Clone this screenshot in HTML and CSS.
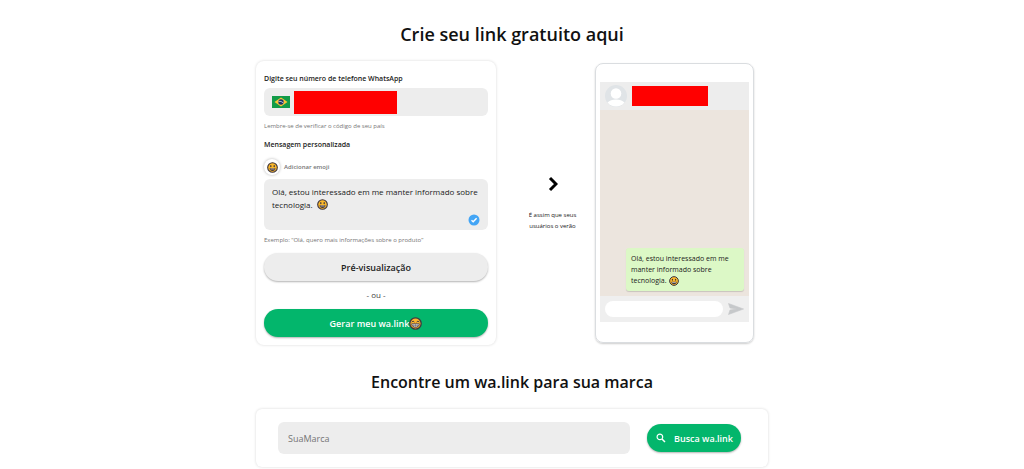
FILE: index.html
```html
<!DOCTYPE html>
<html lang="pt-BR">
<head>
<meta charset="utf-8">
<meta name="viewport" content="width=device-width, initial-scale=1">
<title>wa.link</title>
<link rel="stylesheet" href="styles.css">
</head>
<body>
<svg class="sprite" aria-hidden="true">
  <symbol id="grin" viewBox="0 0 24 24">
    <circle cx="12" cy="12" r="10.5" fill="#fcb92a" stroke="#3d3540" stroke-width="2.4"/>
    <ellipse cx="8.3" cy="9" rx="1.5" ry="2.2" fill="#3d3540"/>
    <ellipse cx="15.7" cy="9" rx="1.5" ry="2.2" fill="#3d3540"/>
    <path d="M5.500 13.500h13c0 3.500-2.800 6-6.500 6s-6.500-2.500-6.500-6z" fill="#3d3540"/>
    <path d="M7.500 14.500h9v1.500h-9z" fill="#e8e0d8"/>
  </symbol>
  <symbol id="beam" viewBox="0 0 24 24">
    <circle cx="12" cy="12" r="10.5" fill="#fcb52e" stroke="#3d3540" stroke-width="2.4"/>
    <path d="M5 9.500q2.500-4 5 0M14 9.500q2.500-4 5 0" fill="none" stroke="#3d3540" stroke-width="1.700"/>
    <path d="M5 12.500h14c0 4-3 6.500-7 6.500s-7-2.500-7-6.500z" fill="#fff" stroke="#3d3540" stroke-width="1.500"/>
    <path d="M5.500 15.500h13M9 13v5.500M12 13v6M15 13v5.500" stroke="#3d3540" stroke-width=".8"/>
  </symbol>
</svg>
<main class="page">
  <h1 class="title">Crie seu link gratuito aqui</h1>
  <div class="creator">
    <form class="card form">
      <label class="label" for="phone">Digite seu número de telefone WhatsApp</label>
      <div class="field phone-field">
        <svg class="flag" viewBox="0 0 18 12" role="img" aria-label="Brasil">
          <path fill="#129b48" d="M0 0h18v12H0z"/>
          <path fill="#fbc437" d="M9 1.500 15.500 6 9 10.500 2.500 6z"/>
          <circle cx="9" cy="6" r="2.700" fill="#1c3567"/>
          <path d="M6.500 5.300q2.800-.4 5 1.700" fill="none" stroke="#eef3f5" stroke-width=".7"/>
        </svg>
        <span class="redacted redacted-phone"></span>
        <input class="phone-input" id="phone" type="tel">
      </div>
      <p class="hint">Lembre-se de verificar o código de seu país</p>
      <label class="label message-label" for="message">Mensagem personalizada</label>
      <button class="emoji-button" type="button">
        <span class="emoji-circle"><svg class="emoji"><use href="#grin"/></svg></span>
        <span>Adicionar emoji</span>
      </button>
      <div class="message-wrap">
        <textarea class="field message" id="message" rows="2">Olá, estou interessado em me manter informado sobre tecnologia.</textarea>
        <svg class="emoji message-emoji" aria-hidden="true"><use href="#grin"/></svg>
        <svg class="check" viewBox="0 0 12 12" aria-hidden="true"><circle cx="6" cy="6" r="5.500" fill="#43a5f5"/><path d="m3.500 6.200 1.700 1.600 3.400-3.600" fill="none" stroke="#fff" stroke-width="1.400"/></svg>
      </div>
      <p class="hint">Exemplo: “Olá, quero mais informações sobre o produto”</p>
      <button class="button button-light" type="button">Pré-visualização</button>
      <p class="or">- ou -</p>
      <button class="button" type="submit">Gerar meu wa.link<svg class="emoji emoji-large" aria-hidden="true"><use href="#beam"/></svg></button>
    </form>
    <div class="explain">
      <svg class="chevron" viewBox="0 0 10 16" aria-hidden="true"><path d="m2 2 6 6-6 6" fill="none" stroke="#000" stroke-width="3"/></svg>
      <p>É assim que seus usuários o verão</p>
    </div>
    <section class="phone" aria-label="Pré-visualização">
      <div class="chat-head">
        <svg class="avatar" viewBox="0 0 22 22" aria-hidden="true"><circle cx="11" cy="11" r="11" fill="#e0e4e7"/><circle cx="11" cy="8.500" r="5.300" fill="#fff"/><path d="M2.500 17.500C4.500 15.500 7.500 14.500 11 14.500s6.500 1 8.500 3a11 11 0 0 1-17 0z" fill="#fff"/></svg>
        <span class="redacted redacted-contact"></span>
      </div>
      <div class="chat-body">
        <p class="bubble">Olá, estou interessado em me manter informado sobre tecnologia. <svg class="emoji emoji-small" aria-hidden="true"><use href="#grin"/></svg></p>
      </div>
      <div class="chat-foot">
        <input class="chat-input" type="text" aria-label="Mensagem">
        <svg class="send" viewBox="0 0 16 12" aria-hidden="true"><path d="M.5.500 15.500 6 .5 11.500 2 7 9 6 2 5z" fill="#c6c8ca" stroke="#c6c8ca" stroke-width=".6"/></svg>
      </div>
    </section>
  </div>
  <h2 class="subtitle">Encontre um wa.link para sua marca</h2>
  <form class="card search">
    <input class="field brand" type="text" placeholder="SuaMarca" aria-label="SuaMarca">
    <button class="button search-button" type="submit">
      <svg class="magnifier" viewBox="0 0 10 10" aria-hidden="true"><circle cx="3.900" cy="3.900" r="2.800" fill="none" stroke="#fff" stroke-width="1.200"/><path d="m6 6 3 3" stroke="#fff" stroke-width="1.500"/></svg>
      Busca wa.link
    </button>
  </form>
</main>
</body>
</html>
```
FILE: styles.css
```css
* { box-sizing: border-box; }

body {
  margin: 0;
  background: #fff;
  color: #212121;
  font-family: "Open Sans", "Noto Sans", sans-serif;
  font-size: 8px;
}

h1, h2, p { margin: 0; }
button, input, textarea { font: inherit; color: inherit; border: 0; outline: 0; }
button { cursor: pointer; }
svg { display: block; flex: none; }
.sprite { position: absolute; width: 0; height: 0; }

.page { max-width: 512px; margin: 0 auto; padding: 20px 0 2px; }

.title, .subtitle { color: #111; font-weight: 600; text-align: center; }
.title { font-size: 18px; line-height: 28px; margin-bottom: 13px; }
.subtitle { font-size: 16px; line-height: 24px; margin: 25px 0 15px; }

.creator {
  display: grid;
  grid-template-columns: 240px 1fr 159px;
  align-items: center;
  margin-right: 14px;
}

.card {
  background: #fff;
  border-radius: 8px;
  box-shadow: 0 0 3px rgba(0, 0, 0, .16);
}

.form { display: flex; flex-direction: column; padding: 12px 8px 8px; }
.label { font-size: 7px; line-height: 12px; font-weight: 600; margin-bottom: 3px; }
.field { background: #ededed; border-radius: 6px; }

.phone-field { display: flex; align-items: center; gap: 4px; height: 28px; padding: 0 8px; }
.flag { width: 18px; height: 12px; }
.redacted { background: #f00; flex: none; }
.redacted-phone { width: 103px; height: 23px; }
.phone-input { flex: 1; min-width: 0; padding: 0; background: transparent; }

.hint { color: #757575; font-size: 6px; line-height: 10px; margin-top: 5px; }
.message-label { margin: 8px 0; }

.emoji-button {
  display: flex;
  align-items: center;
  align-self: flex-start;
  gap: 4px;
  padding: 0;
  background: none;
  color: #757575;
  font-size: 6px;
  font-weight: 600;
}
.emoji-circle {
  display: grid;
  place-items: center;
  width: 16px;
  height: 16px;
  border-radius: 50%;
  box-shadow: 0 0 3px rgba(0, 0, 0, .3);
}
.emoji { width: 11px; height: 11px; }
.emoji-large { width: 13px; height: 13px; }
.emoji-small { display: inline-block; width: 10px; height: 10px; margin-left: 1px; vertical-align: middle; }

.message-wrap { position: relative; margin-top: 4px; }
.message {
  display: block;
  width: 100%;
  height: 51px;
  padding: 6px 8px;
  resize: none;
  line-height: 13px;
  overflow: hidden;
}
.message-emoji { position: absolute; left: 53px; top: 20px; }
.check { position: absolute; right: 8px; bottom: 4px; width: 12px; height: 12px; }

.button {
  display: flex;
  align-items: center;
  justify-content: center;
  height: 28px;
  padding: 0 8px;
  border-radius: 14px;
  background: #03b66c;
  color: #fff;
  font-size: 9px;
  font-weight: 600;
  box-shadow: 0 1px 2px rgba(0, 0, 0, .3);
}
.button-light { margin-top: 8px; background: #ededed; color: #212121; }
.or { color: #424242; line-height: 12px; margin: 8px 0; text-align: center; }

.explain {
  display: flex;
  flex-direction: column;
  align-items: center;
  gap: 18px;
  padding: 2px 16px 0;
  margin-left: 14px;
  font-size: 6px;
  line-height: 11px;
  text-align: center;
}
.chevron { width: 10px; height: 16px; }

.phone {
  padding: 18px 4px 20px;
  border: 1px solid #dadde0;
  border-radius: 8px;
  box-shadow: 0 1px 2px rgba(0, 0, 0, .2);
}
.chat-head {
  display: flex;
  align-items: center;
  gap: 5px;
  height: 28px;
  padding: 0 5px;
  background: #ededed;
}
.avatar { width: 22px; height: 22px; }
.redacted-contact { width: 76px; height: 20px; }
.chat-body {
  display: flex;
  align-items: flex-end;
  justify-content: flex-end;
  height: 186px;
  padding: 5px;
  background: #ece5de;
}
.bubble {
  width: 118px;
  padding: 5px;
  border-radius: 3px;
  background: #dcf8c6;
  box-shadow: 0 1px 1px rgba(0, 0, 0, .15);
  font-size: 7px;
  line-height: 11px;
}
.chat-foot {
  display: flex;
  align-items: center;
  gap: 5px;
  height: 26px;
  padding: 0 5px;
  background: #efefef;
}
.chat-input { flex: 1; min-width: 0; height: 16px; padding: 0 8px; border-radius: 8px; background: #fff; }
.send { width: 16px; height: 12px; }

.search { display: flex; align-items: center; gap: 17px; padding: 13px 27px 13px 22px; border-radius: 6px; }
.brand { flex: 1; min-width: 0; height: 32px; padding: 0 10px; font-size: 9px; }
.brand::placeholder { color: #757575; opacity: 1; }
.search-button { gap: 8px; padding: 0 8px 0 9px; white-space: nowrap; }
.magnifier { width: 10px; height: 10px; }
```
